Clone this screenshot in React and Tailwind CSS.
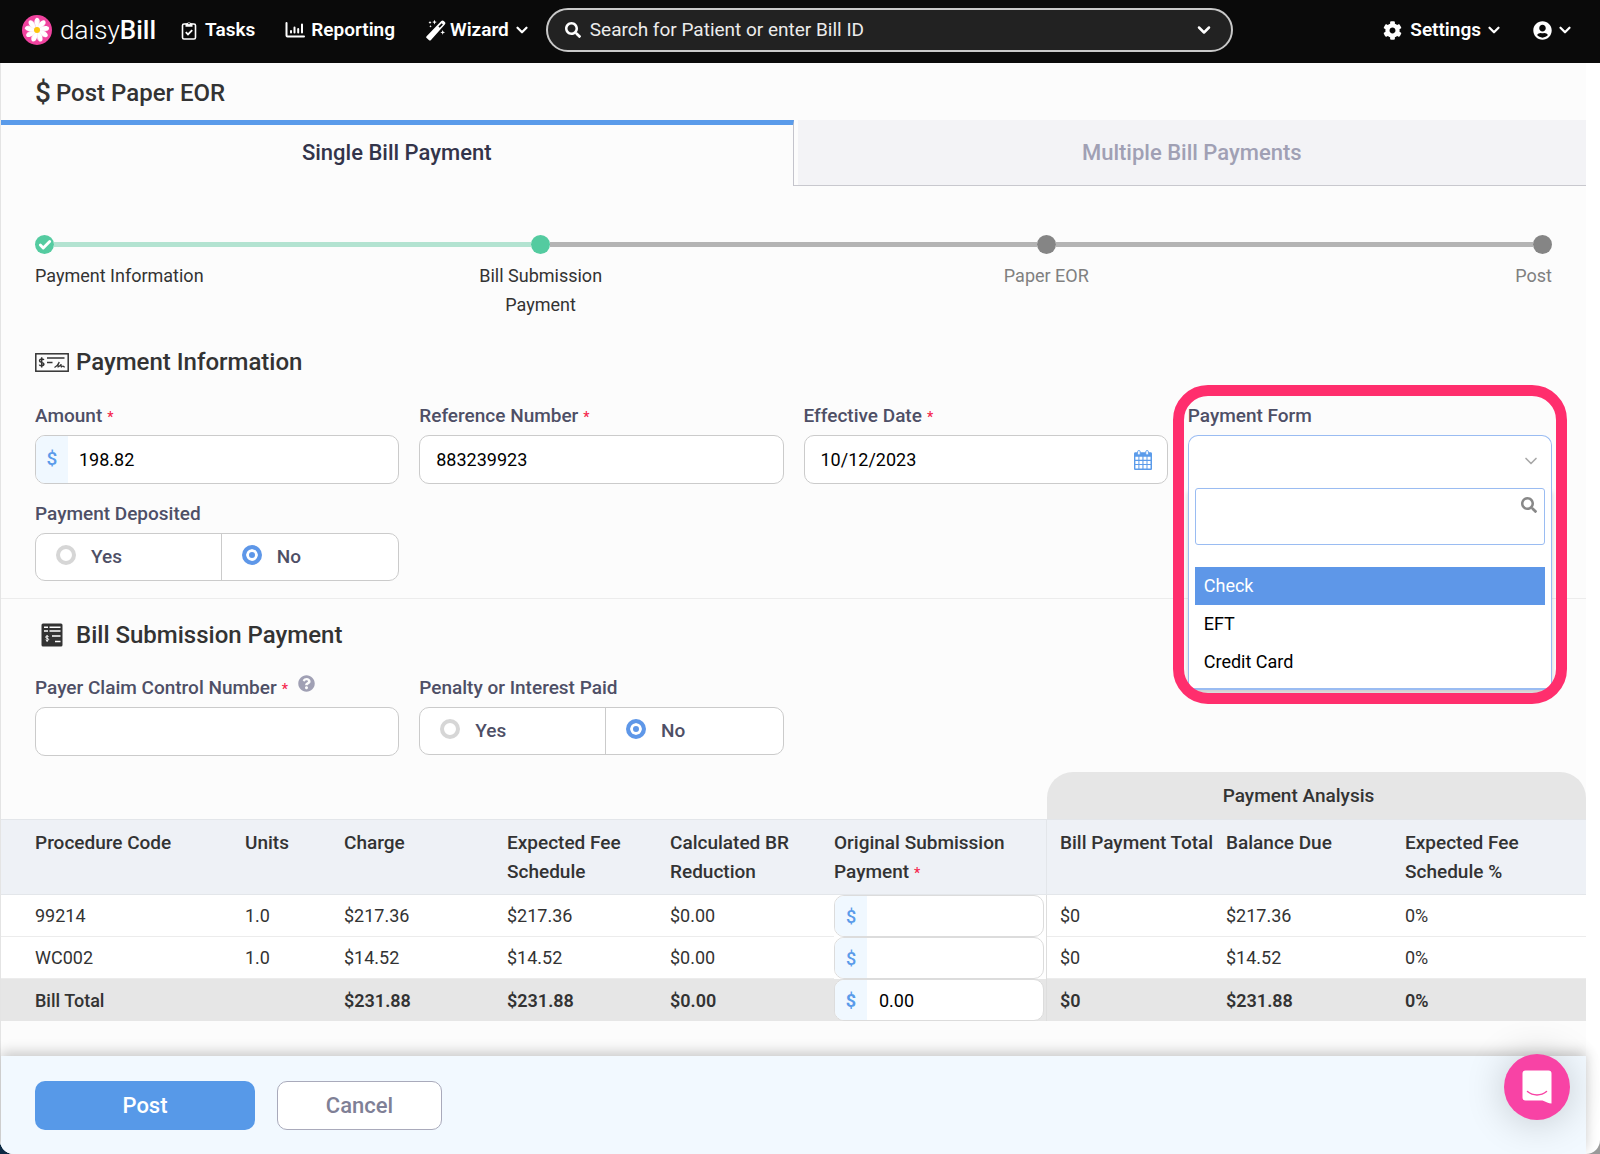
import { useState } from "react";
import { clsx } from "clsx";
import { ChevronDown, Check } from "lucide-react";
import { FaCog, FaUserCircle, FaQuestionCircle, FaSearch } from "react-icons/fa";

const steps = [
  { name: "Payment Information", state: "done" },
  { name: "Bill Submission Payment", state: "current" },
  { name: "Paper EOR", state: "todo" },
  { name: "Post", state: "todo" },
];

const rows = [
  { code: "99214", units: "1.0", charge: "$217.36", fee: "$217.36", reduction: "$0.00", paid: "$0", due: "$217.36", percent: "0%" },
  { code: "WC002", units: "1.0", charge: "$14.52", fee: "$14.52", reduction: "$0.00", paid: "$0", due: "$14.52", percent: "0%" },
];

const paymentForms = ["Check", "EFT", "Credit Card"];

const DaisyLogo = () => (
  <svg viewBox="0 0 32 32" className="h-8 w-8 shrink-0" aria-hidden="true">
    <circle cx="16" cy="16" r="15" fill="#f0439f" />
    {[0, 40, 80, 120, 160, 200, 240, 280, 320].map((angle) => (
      <g key={angle} transform={`rotate(${angle} 16 16)`}>
        <path d="M16 15C12.6 11 12.6 5 15.6 3.8c3.4-.4 4.6 5.600.4 11.200z" fill="#fff" />
        <path d="M16 15c2-3.500 2.800-6.500 2.200-9" stroke="#f9c3df" strokeWidth=".6" fill="none" />
      </g>
    ))}
    <circle cx="16" cy="16" r="3" fill="#fdc50c" />
  </svg>
);

const ClipboardIcon = () => (
  <svg viewBox="0 0 16 20" className="h-5 w-4" fill="none" stroke="currentColor" strokeWidth="1.6" aria-hidden="true">
    <rect x="1.5" y="4" width="13" height="15" rx="1.5" />
    <path d="M4.500 6.800V3.500h1.700a1.900 1.900 0 0 1 3.600 0h1.700v3.300z" fill="currentColor" stroke="none" />
    <circle cx="8" cy="3.400" r=".8" fill="#0a0a0a" stroke="none" />
    <path d="M4.800 12.200l2.200 2.200 4.200-4.200" strokeWidth="1.800" />
  </svg>
);

const ChartIcon = () => (
  <svg viewBox="0 0 20 18" className="h-[18px] w-5" fill="none" stroke="currentColor" strokeWidth="2" strokeLinecap="round" aria-hidden="true">
    <path d="M1.500 2v12.500a1 1 0 0 0 1 1H19" />
    <path d="M6 11.500v-1.500M9.500 11.500v-5M13.200 11.500V8M17 11.500V3.500" />
  </svg>
);

const WandIcon = () => (
  <svg viewBox="0 0 20 22" className="h-[22px] w-5" fill="currentColor" aria-hidden="true">
    <path d="M.6 17.300 15.300 2a1.800 1.800 0 0 1 2.500 0l1 1.100a1.700 1.700 0 0 1 0 2.400L5 21a1.600 1.600 0 0 1-2.200 0L.6 19a1.200 1.200 0 0 1 0-1.700zM12.400 7.500l1.300 1.300 3.200-3.400-1.200-1.200z" fillRule="evenodd" />
    <path d="M8.500.8l.7 1.600 1.600.7-1.600.7-.7 1.600-.7-1.600-1.600-.7 1.600-.7zM4 2l.5 1 1 .5-1 .5L4 5l-.5-1-1-.5 1-.5zM16.700 11l.7 1.700 1.700.7-1.700.7-.7 1.700-.7-1.700-1.700-.7 1.700-.7zM4.500 6l.4.9.9.4-.9.4-.4.9-.4-.9-.9-.4.9-.4z" />
  </svg>
);

const CheckSlipIcon = () => (
  <svg viewBox="0 0 34 19" className="h-[19px] w-[34px]" fill="none" stroke="#333" strokeWidth="1.5" aria-hidden="true">
    <rect x=".8" y=".8" width="32.4" height="17.4" />
    <path d="M12 5h17.500M12 9.500h5.500" />
    <path d="M8.800 7C8.500 5.700 4.500 5.600 4.500 7.700s4.400 1.300 4.400 3.400-4.200 2-4.500.5M6.700 4.200v10.400" />
    <path d="M19.500 14.500c2.500-1.500 4-3.500 4.800-5.500-.8 1.500-1.600 4-1.200 5 1.500-.5 2.400-1.700 3.200-2.700-.3 1-.5 2 0 2.700.8-.6 1-1 1.700-1 .3.800.7 1 2 1" strokeWidth="1.200" />
  </svg>
);

const InvoiceIcon = () => (
  <svg viewBox="0 0 22 24" className="h-6 w-[22px]" aria-hidden="true">
    <rect x=".5" y=".5" width="21" height="23" rx="1.5" fill="#333" />
    <path d="M3 4.200h4M8.500 4.200H19.500M3 8h4M8.500 8H19.500M11 13h8.500M14 18.500h5.500" stroke="#fff" strokeWidth="1.6" />
    <path d="M7.600 13.700c-.3-1-3-1-3 .4s3.100.9 3.100 2.300-2.900 1.400-3.200.3M6.100 12.200v6.800" stroke="#fff" strokeWidth="1" fill="none" />
  </svg>
);

const CalendarIcon = () => (
  <svg viewBox="0 0 18 20" className="h-5 w-[18px]" aria-hidden="true">
    <path d="M0 3.500C0 2.800.6 2.200 1.300 2.200h15.400c.7 0 1.300.6 1.300 1.300v15.200c0 .7-.6 1.300-1.300 1.300H1.300C.6 20 0 19.400 0 18.700z" fill="#5a9bea" />
    <path d="M1.400 6.800h3v3h-3zM5.400 6.800h3v3h-3zM9.500 6.800h3v3h-3zM13.500 6.800h3v3h-3zM1.400 10.900h3v3h-3zM5.400 10.900h3v3h-3zM9.500 10.900h3v3h-3zM13.500 10.900h3v3h-3zM1.400 15h3v3.500h-3zM5.400 15h3v3.500h-3zM9.500 15h3v3.500h-3zM13.500 15h3v3.500h-3z" fill="#fff" />
    <rect x="3.6" y=".5" width="2.6" height="4.5" rx="1.3" fill="#fff" stroke="#5a9bea" strokeWidth=".9" />
    <rect x="11.8" y=".5" width="2.6" height="4.5" rx="1.3" fill="#fff" stroke="#5a9bea" strokeWidth=".9" />
  </svg>
);

const ChatIcon = () => (
  <svg viewBox="0 0 30 34" className="h-[34px] w-[30px]" aria-hidden="true">
    <path d="M3.500.5h23A3 3 0 0 1 29.500 3.500V33.500c-3 0-5.500-2-9-3H3.500a3 3 0 0 1-3-3v-24a3 3 0 0 1 3-3z" fill="#fff" />
    <path d="M5.500 21.500c5.500 4.500 13.500 4.500 19 0" fill="none" stroke="#f843a5" strokeWidth="1.5" strokeLinecap="round" />
  </svg>
);

const Required = () => <span className="ml-[5px] text-sm text-[#f5274e]">*</span>;

const Navbar = () => (
  <header className="flex items-center h-[63px] pb-[3px] pl-[21px] pr-[26px] bg-[#0a0a0a] text-white">
    <a href="#home" className="flex items-center gap-[7px]">
      <DaisyLogo />
      <span className="text-[26px] leading-8 font-light">
        daisy<span className="font-medium">Bill</span>
      </span>
    </a>
    <nav className="flex items-center ml-[25px] text-[19px] font-semibold">
      <a href="#tasks" className="flex items-center gap-2">
        <ClipboardIcon />
        Tasks
      </a>
      <a href="#reporting" className="flex items-center gap-[6px] ml-[30px]">
        <ChartIcon />
        Reporting
      </a>
      <button className="flex items-center gap-1 ml-[31px]">
        <WandIcon />
        Wizard
        <ChevronDown className="h-[18px] w-[18px]" strokeWidth={3} />
      </button>
    </nav>
    <div className="flex flex-1 items-center gap-[9px] max-w-[687px] h-[44px] ml-[15px] px-[17px] rounded-full border-2 border-[#c8c8c8] bg-[#222]">
      <FaSearch className="h-4 w-4" />
      <input
        type="text"
        aria-label="Search for Patient or enter Bill ID"
        placeholder="Search for Patient or enter Bill ID"
        className="flex-1 bg-transparent text-[19px] placeholder:text-[#ececec] outline-none"
      />
      <ChevronDown className="h-5 w-5" strokeWidth={3} />
    </div>
    <div className="flex items-center gap-[30px] ml-auto text-[19px] font-semibold">
      <button className="flex items-center gap-1">
        <FaCog className="h-[19px] w-[19px] mr-1" />
        Settings
        <ChevronDown className="h-[18px] w-[18px]" strokeWidth={3} />
      </button>
      <button className="flex items-center gap-1" aria-label="Account">
        <FaUserCircle className="h-[19px] w-[19px]" />
        <ChevronDown className="h-[18px] w-[18px]" strokeWidth={3} />
      </button>
    </div>
  </header>
);

const Tabs = () => (
  <div className="grid grid-cols-2 h-[66px] text-[22px] font-medium">
    <button className="h-full pb-[6px] border-t-[5px] border-t-[#5a9bea] border-r border-r-[#c4c4cc] text-[#33344a]">
      Single Bill Payment
    </button>
    <button className="h-full pl-1 border-b border-[#c8c8ce] text-[#a0a0b4]">
      <span className="flex items-center justify-center h-full bg-[#f3f3f6]">Multiple Bill Payments</span>
    </button>
  </div>
);

const Stepper = () => (
  <ol className="flex pt-[49px] px-[34px] text-lg leading-[29px]">
    {steps.map((step, i) => {
      const first = i === 0;
      const last = i === steps.length - 1;
      return (
        <li
          key={step.name}
          className={clsx(
            "flex flex-col gap-[7px]",
            first && "flex-1 items-start",
            last && "flex-1 items-end",
            !first && !last && "flex-2 items-center text-center"
          )}
        >
          <div className="flex items-center w-full">
            {!first && <span className={clsx("flex-1 h-[5px]", step.state === "current" ? "bg-[#b3e3d1]" : "bg-[#b4b4b4]")} />}
            <span
              className={clsx(
                "flex items-center justify-center h-[19px] w-[19px] rounded-full",
                step.state === "todo" ? "bg-[#858585]" : "bg-[#54cba0]"
              )}
            >
              {step.state === "done" && <Check className="h-[14px] w-[14px] text-white" strokeWidth={5} />}
            </span>
            {!last && <span className={clsx("flex-1 h-[5px]", step.state === "done" ? "bg-[#b3e3d1]" : "bg-[#b4b4b4]")} />}
          </div>
          <span className={clsx(!first && "max-w-[150px]", step.state === "todo" ? "text-[#808080]" : "text-[#333]")}>
            {step.name}
          </span>
        </li>
      );
    })}
  </ol>
);

const Field = ({ id, label, required, children }) => (
  <div className="flex flex-col gap-[5px]">
    <label htmlFor={id} className="text-[19px] leading-[29px] font-medium text-[#4e4f66]">
      {label}
      {required && <Required />}
    </label>
    {children}
  </div>
);

const inputBox = "w-full h-[49px] px-4 rounded-[10px] border border-[#cbcbcb] bg-white text-lg text-black outline-none";

const YesNo = ({ name, label }) => {
  const [value, setValue] = useState("No");
  return (
    <fieldset>
      <legend className="mb-[5px] text-[19px] leading-[29px] font-medium text-[#4e4f66]">{label}</legend>
      <div className="flex h-12 rounded-[10px] border border-[#cbcbcb] bg-white text-[19px] font-medium text-[#4e4f66]">
        {["Yes", "No"].map((option) => (
          <label
            key={option}
            className={clsx("flex items-center gap-[15px] pl-5", option === "Yes" ? "w-[51%]" : "flex-1 border-l border-[#cbcbcb]")}
          >
            <input
              type="radio"
              name={name}
              checked={value === option}
              onChange={() => setValue(option)}
              className="appearance-none h-5 w-5 mb-1 rounded-full border-4 border-[#d6d6d6] checked:border-[#5e97e8] checked:bg-[#5e97e8] checked:shadow-[inset_0_0_0_3px_white]"
            />
            {option}
          </label>
        ))}
      </div>
    </fieldset>
  );
};

const PaymentFormField = () => (
  <div className="relative">
    <Field id="payment-form" label="Payment Form">
      <div className="relative h-[49px]">
        <select
          id="payment-form"
          className="appearance-none w-full h-[53px] px-4 rounded-t-[10px] border border-b-0 border-[#9abcf2] bg-white text-lg outline-none"
        >
          <option value=""></option>
          {paymentForms.map((form) => (
            <option key={form}>{form}</option>
          ))}
        </select>
        <ChevronDown className="absolute right-[11px] top-4 h-5 w-5 text-[#a8a8a8] pointer-events-none" />
        {/* Open list */}
        <div className="absolute inset-x-0 top-[53px] h-[202px] px-[6px] border border-t-0 border-b-2 border-[#9abcf2] bg-white shadow-[0_4px_5px_rgba(0,0,0,0.18)]">
          <div className="relative mb-[22px]">
            <input
              type="text"
              aria-label="Filter payment forms"
              className="block w-full h-[57px] px-3 border border-[#9abcf2] rounded-[3px] bg-white outline-none"
            />
            <FaSearch className="absolute right-2 top-[9px] h-4 w-4 text-[#888] pointer-events-none" />
          </div>
          <ul role="listbox" aria-label="Payment Form" className="text-lg leading-[38px] text-black">
            {paymentForms.map((form, i) => (
              <li
                key={form}
                role="option"
                aria-selected={i === 0}
                className={clsx("h-[38px] px-[9px]", i === 0 && "bg-[#5e97e8] text-white")}
              >
                {form}
              </li>
            ))}
          </ul>
        </div>
      </div>
    </Field>
    <div className="absolute z-10 -top-4 -inset-x-[15px] h-[319px] rounded-[35px] border-[11px] border-[#ff2e6d] pointer-events-none" />
  </div>
);

const SectionTitle = ({ icon, children }) => (
  <h2 className="flex items-center text-2xl leading-[34px] font-medium text-[#333]">
    <span className="flex justify-center w-[34px] mr-[7px]">{icon}</span>
    {children}
  </h2>
);

const MoneyCell = ({ label, value, bold }) => (
  <td className="p-0 pr-[2px] align-top border-r border-[#dedede]">
    <div className="flex h-[42px] rounded-[10px] border border-[#dcdcdc] bg-white overflow-hidden">
      <span className={clsx("flex items-center justify-center w-8 shrink-0 bg-[#f0f8ff] text-[#5a9bea]", bold ? "font-bold" : "font-medium")}>$</span>
      <input type="text" aria-label={label} defaultValue={value} className="w-full min-w-0 px-3 font-normal text-black outline-none" />
    </div>
  </td>
);

const BillTable = () => {
  const head = "py-2 align-top border-y border-[#e3e6ea]";
  const cell = "p-0 border-b border-[#ececec]";
  return (
    <table className="w-full mt-4 table-fixed border-separate border-spacing-0 text-lg leading-[29px] text-left text-[#333]">
      <colgroup>
        <col className="w-[244px]" />
        <col className="w-[99px]" />
        <col className="w-[163px]" />
        <col className="w-[163px]" />
        <col className="w-[164px]" />
        <col className="w-[213px]" />
        <col className="w-[179px]" />
        <col className="w-[179px]" />
        <col className="w-[181px]" />
      </colgroup>
      <thead className="text-[19px]">
        <tr className="h-[47px] text-center">
          <td colSpan={6}></td>
          <th colSpan={3} className="p-0 pr-9 font-medium rounded-t-[26px] bg-[#e6e6e6]">Payment Analysis</th>
        </tr>
        <tr className="bg-[#eef1f6] [&>th]:font-medium">
          <th className={clsx(head, "pl-[34px]")}>Procedure Code</th>
          <th className={head}>Units</th>
          <th className={head}>Charge</th>
          <th className={clsx(head, "pr-8")}>Expected Fee Schedule</th>
          <th className={clsx(head, "pr-8")}>Calculated BR Reduction</th>
          <th className={clsx(head, "border-r")}>
            Original Submission
            <br />
            Payment
            <Required />
          </th>
          <th className={clsx(head, "pl-[13px] whitespace-nowrap")}>Bill Payment Total</th>
          <th className={head}>Balance Due</th>
          <th className={clsx(head, "pr-8")}>Expected Fee Schedule %</th>
        </tr>
      </thead>
      <tbody className="bg-white">
        {rows.map((row) => (
          <tr key={row.code} className="h-[42px]">
            <td className={clsx(cell, "pl-[34px]")}>{row.code}</td>
            <td className={cell}>{row.units}</td>
            <td className={cell}>{row.charge}</td>
            <td className={cell}>{row.fee}</td>
            <td className={cell}>{row.reduction}</td>
            <MoneyCell label={`Original submission payment for ${row.code}`} />
            <td className={clsx(cell, "pl-[13px]")}>{row.paid}</td>
            <td className={cell}>{row.due}</td>
            <td className={cell}>{row.percent}</td>
          </tr>
        ))}
      </tbody>
      <tfoot>
        <tr className="h-[42px] bg-[#e6e6e6] font-semibold">
          <th colSpan={2} className="p-0 pl-[34px] font-medium">Bill Total</th>
          <td>$231.88</td>
          <td>$231.88</td>
          <td>$0.00</td>
          <MoneyCell label="Bill total payment" value="0.00" bold />
          <td className="pl-[13px]">$0</td>
          <td>$231.88</td>
          <td>0%</td>
        </tr>
      </tfoot>
    </table>
  );
};

const App = () => (
  <div className="min-h-screen flex flex-col bg-linear-to-r from-[#0c2a44] to-[#9a9a9a] font-['Roboto',sans-serif]">
    <div className="flex flex-1 flex-col rounded-b-[14px] bg-white overflow-hidden">
      <Navbar />
      <div className="flex flex-1 flex-col mr-[14px] border-l border-[#e4e4e4] bg-[#fcfcfc]">
        <h1 className="flex items-center gap-[5px] h-[57px] pt-[2px] pl-[34px] text-2xl font-medium text-[#333]">
          <span className="text-[28px]">$</span>
          Post Paper EOR
        </h1>
        <Tabs />
        <Stepper />

        {/* Payment information */}
        <section className="px-[34px] pt-[26px] pb-[17px] border-b border-[#ececec]">
          <SectionTitle icon={<CheckSlipIcon />}>Payment Information</SectionTitle>
          <div className="grid grid-cols-4 gap-x-5 gap-y-[15px] mt-[22px]">
            <Field id="amount" label="Amount" required>
              <div className="flex h-[49px] rounded-[10px] border border-[#cbcbcb] bg-white overflow-hidden">
                <span className="flex items-center justify-center w-8 shrink-0 bg-[#f0f8ff] text-[19px] font-medium text-[#5a9bea]">$</span>
                <input id="amount" type="text" defaultValue="198.82" className="w-full px-[11px] text-lg text-black outline-none" />
              </div>
            </Field>
            <Field id="reference" label="Reference Number" required>
              <input id="reference" type="text" defaultValue="883239923" className={inputBox} />
            </Field>
            <Field id="effective-date" label="Effective Date" required>
              <div className="relative">
                <input id="effective-date" type="text" defaultValue="10/12/2023" className={inputBox} />
                <button className="absolute right-4 top-[15px]" aria-label="Pick a date">
                  <CalendarIcon />
                </button>
              </div>
            </Field>
            <PaymentFormField />
            <YesNo name="deposited" label="Payment Deposited" />
          </div>
        </section>

        {/* Bill submission payment */}
        <section className="px-[34px] pt-[19px]">
          <SectionTitle icon={<InvoiceIcon />}>Bill Submission Payment</SectionTitle>
          <div className="grid grid-cols-4 gap-x-5 mt-[21px]">
            <div className="flex flex-col gap-[5px]">
              <div className="flex gap-[10px]">
                <label htmlFor="claim-number" className="text-[19px] leading-[29px] font-medium text-[#4e4f66]">
                  Payer Claim Control Number<Required />
                </label>
                <FaQuestionCircle className="h-[17px] w-[17px] mt-[2px] text-[#a0a0b4]" />
              </div>
              <input id="claim-number" type="text" className={inputBox} />
            </div>
            <YesNo name="penalty" label="Penalty or Interest Paid" />
          </div>
        </section>

        <BillTable />

        <footer className="sticky bottom-0 flex items-center gap-[22px] h-[98px] mt-auto px-[34px] bg-[#f2f9ff] text-[22px] font-medium shadow-[0_-4px_12px_rgba(0,0,0,0.2)]">
          <button className="h-[49px] w-[220px] rounded-[10px] bg-[#5799e8] text-white">Post</button>
          <button className="h-[49px] w-[165px] rounded-[10px] border border-[#a9aabb] bg-white text-[#7f8096]">Cancel</button>
        </footer>
      </div>
    </div>
    <button
      aria-label="Open chat"
      className="fixed right-[30px] bottom-[34px] flex items-center justify-center h-[66px] w-[66px] rounded-full bg-[#f843a5] shadow-[0_2px_40px_rgba(0,0,0,0.2)]"
    >
      <ChatIcon />
    </button>
  </div>
);

export default App;
